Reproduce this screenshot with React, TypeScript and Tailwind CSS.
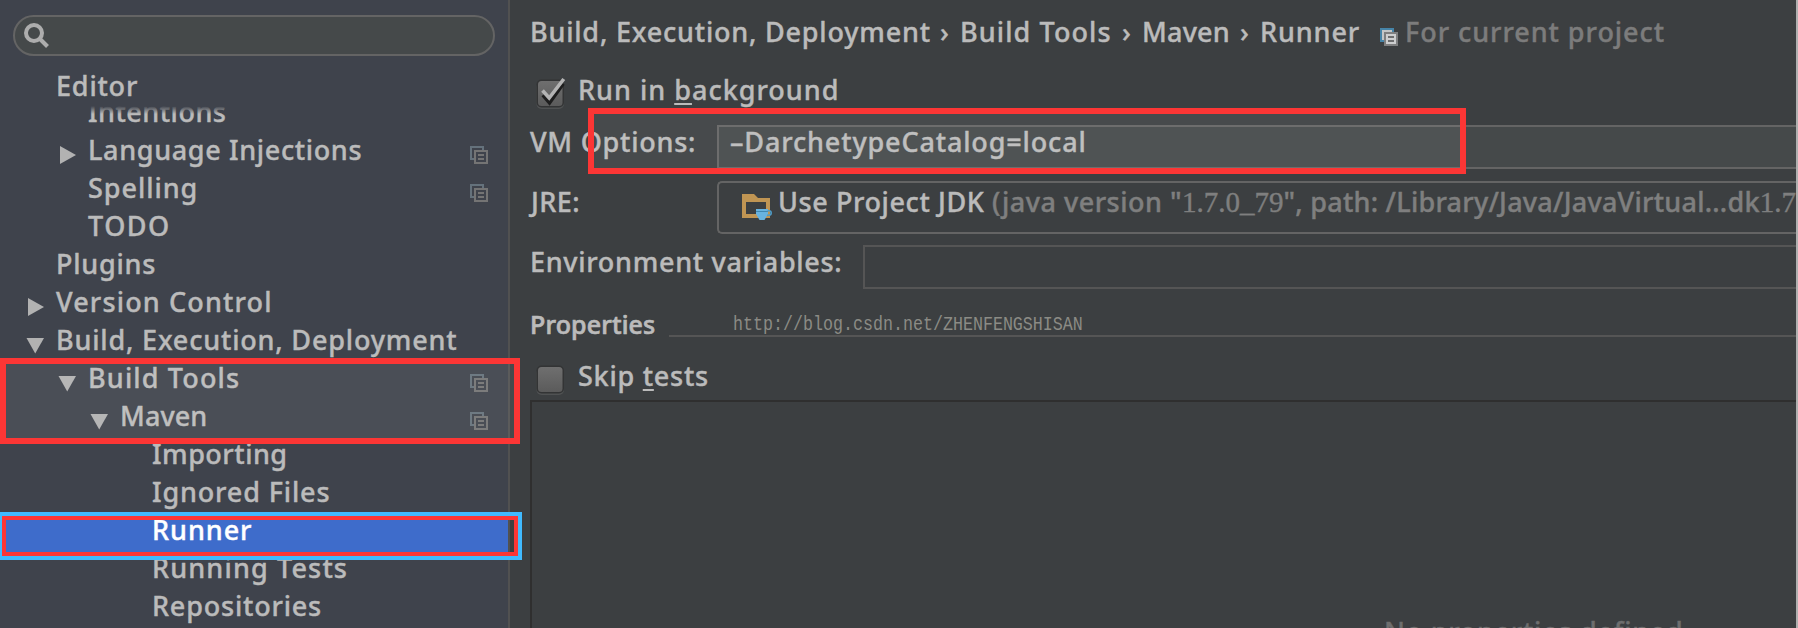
import type { ReactNode } from 'react';

type Arrow = 'right' | 'down' | null;

interface TreeItem {
  label: string;
  spacing: string;
  indent: string;
  arrow?: Arrow;
  projectLevel?: boolean;
  selected?: boolean;
}

const TREE: TreeItem[] = [
  { label: 'Language Injections', spacing: 'tracking-[0.65px]', indent: 'pl-[56px]', arrow: 'right', projectLevel: true },
  { label: 'Spelling', spacing: 'tracking-[0.95px]', indent: 'pl-[56px]', projectLevel: true },
  { label: 'TODO', spacing: 'tracking-[1.5px]', indent: 'pl-[56px]' },
  { label: 'Plugins', spacing: 'tracking-[0.75px]', indent: 'pl-[24px]' },
  { label: 'Version Control', spacing: 'tracking-[1.15px]', indent: 'pl-[24px]', arrow: 'right' },
  { label: 'Build, Execution, Deployment', spacing: 'tracking-[0.82px]', indent: 'pl-[24px]', arrow: 'down' },
  { label: 'Build Tools', spacing: 'tracking-[1.15px]', indent: 'pl-[56px]', arrow: 'down', projectLevel: true },
  { label: 'Maven', spacing: 'tracking-[0.1px]', indent: 'pl-[88px]', arrow: 'down', projectLevel: true },
  { label: 'Importing', spacing: 'tracking-[0.5px]', indent: 'pl-[120px]' },
  { label: 'Ignored Files', spacing: 'tracking-[0.85px]', indent: 'pl-[120px]' },
  { label: 'Runner', spacing: 'tracking-[0.95px]', indent: 'pl-[120px]', selected: true },
  { label: 'Running Tests', spacing: 'tracking-[1.15px]', indent: 'pl-[120px]' },
  { label: 'Repositories', spacing: 'tracking-[0.8px]', indent: 'pl-[120px]' },
];

function ArrowIcon({ dir }: { dir?: Arrow }) {
  return (
    <svg className="h-[38px] w-8 shrink-0" viewBox="0 0 32 38">
      {dir === 'right' && <path d="M4 12 L20 21 L4 30 Z" fill="#b2b2b2" />}
      {dir === 'down' && <path d="M2.5 14 H20 L11.2 29.5 Z" fill="#b2b2b2" />}
    </svg>
  );
}

function CopyIcon() {
  return (
    <svg className="mt-3 mr-[20px] ml-auto size-[18px] shrink-0" viewBox="0 0 18 18" fill="none" shapeRendering="crispEdges">
      <path d="M4 13 H1 V1 H13 V4" stroke="#65727c" strokeWidth="2" />
      <rect x="5" y="5" width="12" height="12" stroke="#747474" strokeWidth="2" />
      <path d="M8 9 H14 M8 13 H14" stroke="#747474" strokeWidth="2" />
    </svg>
  );
}

function ProjectIcon() {
  return (
    <svg className="mt-[28px] ml-[19px] size-[18px] shrink-0" viewBox="0 0 18 18" shapeRendering="crispEdges">
      <rect width="14" height="14" fill="#4684a8" />
      <rect x="2" y="2" width="10" height="10" fill="#c4c6c7" />
      <rect x="4" y="4" width="14" height="14" fill="#7e7f80" />
      <rect x="6" y="6" width="10" height="10" fill="#cdcecf" />
      <path d="M8 9 H14 M8 13 H14" stroke="#6d6e6f" strokeWidth="2" />
    </svg>
  );
}

function FolderIcon() {
  return (
    <svg className="mt-[11px] ml-[23px] h-[30px] w-[32px] shrink-0" viewBox="0 0 32 30">
      <path fillRule="evenodd" d="M0 0 H12 L16 4 H28 V24 H0 Z M4 8 V20 H24 V8 Z" fill="#c09553" />
      <path d="M14 15 H26 V20 L22.500 26 H17.500 L14 20 Z" fill="#68b3e0" />
      <path d="M14 17.500 H26" stroke="#3f87b0" strokeWidth="1" />
      <path d="M25.500 16.800 H27 Q29.200 16.800 29.200 19 Q29.200 21.200 27 21.200 H25" fill="none" stroke="#4f9bc6" strokeWidth="1.600" />
    </svg>
  );
}

function Checkbox({ checked }: { checked?: boolean }) {
  return (
    <svg className="ml-[5px] h-[36px] w-[34px] shrink-0" viewBox="0 0 34 36">
      <defs>
        <linearGradient id="box" x1="0" y1="0" x2="0" y2="1">
          <stop offset="0" stopColor="#6f6f6f" />
          <stop offset="1" stopColor="#5b5b5b" />
        </linearGradient>
      </defs>
      <rect x="1.500" y="6" width="27.500" height="27" rx="5" fill="#505253" />
      <rect x="1.500" y="3.500" width="27.500" height="28" rx="5" fill="#333435" />
      <rect x="3" y="5" width="24.500" height="25" rx="3.500" fill="url(#box)" />
      {checked && (
        <>
          <path d="M8 19 L14.500 26.500 L28 7.500" fill="none" stroke="#1e1e1e" strokeWidth="4" />
          <path d="M7.500 14.500 L14.200 22 L28.800 3" fill="none" stroke="#b4b4b4" strokeWidth="3.600" />
        </>
      )}
    </svg>
  );
}

function Tree() {
  return (
    <div className="flex flex-col">
      {TREE.map((item) => (
        <div
          key={item.label}
          className={`flex h-[38px] shrink-0 items-start ${item.indent} ${item.selected ? 'bg-[#3e6ccb] text-white' : ''}`}
        >
          <ArrowIcon dir={item.arrow} />
          <span className={`leading-[31px] ${item.spacing}`}>{item.label}</span>
          {item.projectLevel && <CopyIcon />}
        </div>
      ))}
    </div>
  );
}

function Mnemonic({ children }: { children: ReactNode }) {
  return <span className="underline decoration-2 underline-offset-[3px]">{children}</span>;
}

export default function App() {
  return (
    <div className="relative flex h-[628px] w-[1798px] overflow-hidden bg-[#3c3f41] font-['Noto_Sans','Open_Sans',sans-serif] text-[27px] font-medium whitespace-nowrap text-[#bbbbbb] [-webkit-text-stroke:0.4px]">
      <aside className="flex w-[510px] shrink-0 flex-col overflow-hidden border-r-2 border-[#515151] bg-[#3f434c]">
        <div className="mt-[15px] ml-[13px] flex h-[41px] w-[482px] shrink-0 items-center rounded-full border-2 border-[#646464] bg-[#45494a] pl-[9px]">
          <svg className="size-[26px]" viewBox="0 0 26 26" fill="none" stroke="#adadad">
            <circle cx="10" cy="10" r="8" strokeWidth="4" />
            <path d="M15.500 15.500 L23.500 23.500" strokeWidth="4" />
          </svg>
        </div>
        <div className="mt-[11px] h-[39px] shrink-0 pl-[56px] leading-[38px] tracking-[0.8px]">Editor</div>
        <div className="relative h-[28px] shrink-0 overflow-hidden">
          <div className="-mt-[10px] pl-[88px] leading-[31px] tracking-[0.5px]">Intentions</div>
          <div className="absolute inset-x-0 top-0 h-[8px] bg-gradient-to-b from-[#3f434c] to-transparent" />
        </div>
        <Tree />
      </aside>

      <main className="flex w-[1286px] shrink-0 flex-col overflow-hidden pl-[20px]">
        <div className="flex h-[63px] shrink-0 leading-[63px]">
          <span className="w-[410px] tracking-[0.8px]">Build, Execution, Deployment</span>
          <span className="w-[20px]">›</span>
          <span className="w-[162px] tracking-[1.1px]">Build Tools</span>
          <span className="w-[20px]">›</span>
          <span className="w-[98px] tracking-[0.2px]">Maven</span>
          <span className="w-[20px]">›</span>
          <span className="w-[101px] tracking-[0.9px]">Runner</span>
          <ProjectIcon />
          <span className="ml-[7px] tracking-[0.95px] text-[#7c7c7c]">For current project</span>
        </div>

        <div className="flex h-[53px] shrink-0 leading-[53px]">
          <div className="mt-[13px] flex">
            <Checkbox checked />
          </div>
          <span className="ml-[9px] tracking-[1px]">
            Run in <Mnemonic>b</Mnemonic>ackground
          </span>
        </div>

        <div className="mt-[9px] flex h-[44px] shrink-0 leading-[33px]">
          <span className="w-[187px] tracking-[0.75px]">VM Options:</span>
          <div className="h-[44px] flex-1 border-2 border-r-0 border-[#646464] bg-[#45494a] pl-[11px]">
            <div className="-mt-[2px] tracking-[0.85px]">–DarchetypeCatalog=local</div>
          </div>
        </div>

        <div className="mt-3 flex h-[53px] shrink-0 leading-[41px]">
          <span className="w-[187px] pl-px tracking-[0.4px]">JRE:</span>
          <div className="flex flex-1 overflow-hidden rounded-l-[5px] border-2 border-r-0 border-[#646464]">
            <FolderIcon />
            <span className="-mt-[2px] ml-[4px] w-[214px] shrink-0 tracking-[0.6px]">Use Project JDK</span>
            <span className="-mt-[2px] text-[#7f7f7f]">
              <span className="tracking-[0.5px]">(java version "</span>
              <span className="font-['Liberation_Serif',serif] text-[29px] font-normal">1.7.0_79</span>
              <span className="tracking-[0.25px]">", path: /Library/Java/JavaVirtual...dk</span>
              <span className="font-['Liberation_Serif',serif] text-[29px] font-normal">1.7</span>
            </span>
          </div>
        </div>

        <div className="mt-[11px] flex h-[44px] shrink-0 leading-[33px]">
          <span className="w-[333px] tracking-[0.7px]">Environment variables:</span>
          <div className="h-[44px] flex-1 border-2 border-r-0 border-[#555555]" />
        </div>

        <div className="mt-[19px] flex h-[31px] shrink-0 leading-[32px]">
          <span className="w-[139px] text-[25px] tracking-[0.15px] [-webkit-text-stroke:0.7px]">Properties</span>
          <div className="h-[29px] flex-1 border-b-2 border-[#555555] pl-[64px]">
            <div className="mt-[9px] origin-bottom-left scale-y-[1.2] font-['Liberation_Mono',monospace] text-[16.67px] leading-[20px] font-normal text-[#8b8b85] [-webkit-text-stroke:0px]">
              http://blog.csdn.net/ZHENFENGSHISAN
            </div>
          </div>
        </div>

        <div className="mt-[17px] flex h-[40px] shrink-0 leading-[40px]">
          <div className="mt-[6px] flex">
            <Checkbox />
          </div>
          <span className="ml-[9px] tracking-[0.75px]">
            Skip <Mnemonic>t</Mnemonic>ests
          </span>
        </div>

        <div className="mt-[4px] flex-1 overflow-hidden border-t-2 border-l-2 border-[#2f2f2f] pt-[214px] pl-[852px] leading-[32px] tracking-[0.75px] text-[#6e6e6e]">
          No properties defined
        </div>
      </main>
      <div className="w-[2px] bg-[#b0b0b0]" />

      <div className="absolute top-[358px] left-0 h-[86px] w-[520px] border-6 border-[#fc3635] bg-white/6" />
      <div className="absolute top-[512px] -left-[2px] h-[48px] w-[524px] border-4 border-[#40baff]">
        <div className="h-full w-full border-4 border-[#fc3635]" />
      </div>
      <div className="absolute top-[108px] left-[588px] h-[66px] w-[878px] border-6 border-[#fc3635] bg-white/6" />
    </div>
  );
}
